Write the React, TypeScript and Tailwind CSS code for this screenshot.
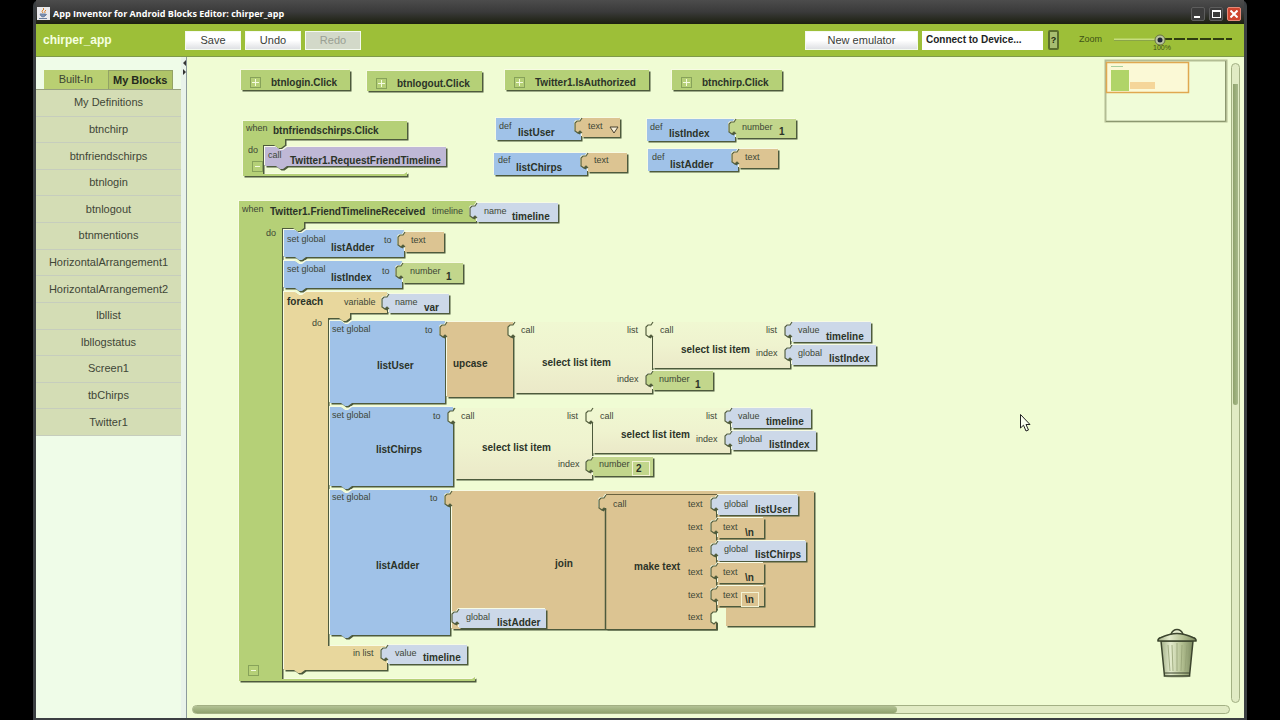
import type { ReactNode } from "react";

const drawers = [
  "My Definitions",
  "btnchirp",
  "btnfriendschirps",
  "btnlogin",
  "btnlogout",
  "btnmentions",
  "HorizontalArrangement1",
  "HorizontalArrangement2",
  "lbllist",
  "lbllogstatus",
  "Screen1",
  "tbChirps",
  "Twitter1",
];

// where the viewport sits on the workspace
const PAN = { x: 187, y: 57 };

const GREEN = "#b5d077";
const BLUE = "#a0c2e8";
const PALE = "#ccd8e8";
const TAN = "#dcc492";
const LIME = "#c2d68c";
const SAND = "#e8d79d";
const LILAC = "#bfb8d6";
const CREAM = "url(#cream)";

type Shape = "box" | "plug" | "statement";
// kind, x, y, text ("s" small, "b" bold)
type Label = ["s" | "b", number, number, string];

interface BlockData {
  shape: Shape;
  x: number;
  y: number;
  w: number;
  h: number;
  fill: string;
  labels: Label[];
}

const PLUG_EDGE = "l-2 3 h-3 l-2 2 v8 l3 2 l2 -2 l2 2";

function outline({ shape, x, y, w, h }: BlockData) {
  if (shape === "plug") {
    return `M${x} ${y} ${PLUG_EDGE} V${y + h} h${w} v${-h} Z`;
  }
  if (shape === "statement") {
    return `M${x} ${y} h11 l4 3 h3 l4 -3 H${x + w} v${h} H${x + 22} l-4 3 h-3 l-4 -3 H${x} Z`;
  }
  return `M${x} ${y} h${w} v${h} h${-w} Z`;
}

const collapsed: BlockData[] = [
  { shape: "box", x: 241, y: 70, w: 109, h: 20, fill: GREEN, labels: [["b", 271, 86, "btnlogin.Click"]] },
  { shape: "box", x: 367, y: 71, w: 115, h: 20, fill: GREEN, labels: [["b", 397, 87, "btnlogout.Click"]] },
  { shape: "box", x: 505, y: 70, w: 144, h: 20, fill: GREEN, labels: [["b", 535, 86, "Twitter1.IsAuthorized"]] },
  { shape: "box", x: 672, y: 70, w: 110, h: 20, fill: GREEN, labels: [["b", 702, 86, "btnchirp.Click"]] },
];

const definitions: BlockData[] = [
  { shape: "box", x: 496, y: 118, w: 85, h: 22, fill: BLUE, labels: [["s", 499, 129, "def"], ["b", 518, 136, "listUser"]] },
  { shape: "plug", x: 582, y: 118, w: 38, h: 19, fill: TAN, labels: [["s", 588, 129, "text"]] },
  { shape: "box", x: 494, y: 153, w: 93, h: 22, fill: BLUE, labels: [["s", 498, 163, "def"], ["b", 516, 171, "listChirps"]] },
  { shape: "plug", x: 588, y: 153, w: 39, h: 19, fill: TAN, labels: [["s", 594, 163, "text"]] },
  { shape: "box", x: 647, y: 119, w: 88, h: 22, fill: BLUE, labels: [["s", 650, 130, "def"], ["b", 669, 137, "listIndex"]] },
  { shape: "plug", x: 736, y: 119, w: 60, h: 19, fill: LIME, labels: [["s", 742, 130, "number"], ["b", 779, 135, "1"]] },
  { shape: "box", x: 648, y: 149, w: 90, h: 22, fill: BLUE, labels: [["s", 652, 160, "def"], ["b", 670, 168, "listAdder"]] },
  { shape: "plug", x: 739, y: 149, w: 39, h: 19, fill: TAN, labels: [["s", 745, 160, "text"]] },
];

const handlerBody: BlockData[] = [
  { shape: "plug", x: 477, y: 203, w: 81, h: 19, fill: PALE, labels: [["s", 484, 214, "name"], ["b", 512, 220, "timeline"]] },
  { shape: "statement", x: 284, y: 230, w: 120, h: 27, fill: BLUE, labels: [["s", 287, 242, "set global"], ["b", 331, 251, "listAdder"], ["s", 384, 243, "to"]] },
  { shape: "plug", x: 405, y: 232, w: 39, h: 20, fill: TAN, labels: [["s", 411, 243, "text"]] },
  { shape: "statement", x: 284, y: 261, w: 118, h: 27, fill: BLUE, labels: [["s", 287, 272, "set global"], ["b", 331, 281, "listIndex"], ["s", 382, 274, "to"]] },
  { shape: "plug", x: 403, y: 263, w: 60, h: 20, fill: LIME, labels: [["s", 410, 274, "number"], ["b", 446, 280, "1"]] },
];

const loopBody: BlockData[] = [
  { shape: "plug", x: 389, y: 294, w: 60, h: 19, fill: PALE, labels: [["s", 395, 305, "name"], ["b", 424, 311, "var"]] },

  { shape: "statement", x: 330, y: 321, w: 115, h: 82, fill: BLUE, labels: [["s", 332, 332, "set global"], ["b", 377, 369, "listUser"], ["s", 425, 333, "to"]] },
  { shape: "plug", x: 447, y: 322, w: 66, h: 75, fill: TAN, labels: [["b", 453, 367, "upcase"]] },
  { shape: "plug", x: 515, y: 322, w: 137, h: 71, fill: CREAM, labels: [["s", 521, 333, "call"], ["b", 542, 366, "select list item"], ["s", 627, 333, "list"], ["s", 617, 382, "index"]] },
  { shape: "plug", x: 653, y: 322, w: 137, h: 46, fill: CREAM, labels: [["s", 660, 333, "call"], ["b", 681, 353, "select list item"], ["s", 766, 333, "list"], ["s", 756, 356, "index"]] },
  { shape: "plug", x: 792, y: 322, w: 79, h: 20, fill: PALE, labels: [["s", 798, 333, "value"], ["b", 826, 340, "timeline"]] },
  { shape: "plug", x: 792, y: 345, w: 84, h: 20, fill: PALE, labels: [["s", 798, 356, "global"], ["b", 829, 362, "listIndex"]] },
  { shape: "plug", x: 653, y: 371, w: 60, h: 19, fill: LIME, labels: [["s", 659, 382, "number"], ["b", 695, 388, "1"]] },

  { shape: "statement", x: 330, y: 407, w: 123, h: 79, fill: BLUE, labels: [["s", 332, 418, "set global"], ["b", 376, 453, "listChirps"], ["s", 433, 419, "to"]] },
  { shape: "plug", x: 455, y: 408, w: 137, h: 71, fill: CREAM, labels: [["s", 461, 419, "call"], ["b", 482, 451, "select list item"], ["s", 567, 419, "list"], ["s", 558, 467, "index"]] },
  { shape: "plug", x: 593, y: 408, w: 137, h: 45, fill: CREAM, labels: [["s", 600, 419, "call"], ["b", 621, 438, "select list item"], ["s", 706, 419, "list"], ["s", 696, 442, "index"]] },
  { shape: "plug", x: 732, y: 408, w: 79, h: 20, fill: PALE, labels: [["s", 738, 419, "value"], ["b", 766, 425, "timeline"]] },
  { shape: "plug", x: 732, y: 431, w: 84, h: 19, fill: PALE, labels: [["s", 738, 442, "global"], ["b", 769, 448, "listIndex"]] },
  { shape: "plug", x: 593, y: 457, w: 60, h: 19, fill: LIME, labels: [["s", 599, 467, "number"]] },

  { shape: "statement", x: 330, y: 490, w: 120, h: 145, fill: BLUE, labels: [["s", 332, 500, "set global"], ["b", 376, 569, "listAdder"], ["s", 430, 501, "to"]] },
];

const joinBody: BlockData[] = [
  { shape: "plug", x: 606, y: 495, w: 110, h: 134, fill: TAN, labels: [["s", 613, 507, "call"], ["b", 634, 570, "make text"]] },
  { shape: "plug", x: 718, y: 495, w: 80, h: 20, fill: PALE, labels: [["s", 724, 507, "global"], ["b", 755, 513, "listUser"]] },
  { shape: "plug", x: 718, y: 518, w: 46, h: 20, fill: TAN, labels: [["s", 723, 530, "text"], ["b", 745, 536, "\\n"]] },
  { shape: "plug", x: 718, y: 541, w: 88, h: 20, fill: PALE, labels: [["s", 724, 552, "global"], ["b", 755, 558, "listChirps"]] },
  { shape: "plug", x: 718, y: 563, w: 46, h: 20, fill: TAN, labels: [["s", 723, 575, "text"], ["b", 745, 581, "\\n"]] },
  { shape: "plug", x: 718, y: 586, w: 46, h: 20, fill: TAN, labels: [["s", 723, 598, "text"]] },
  { shape: "plug", x: 459, y: 609, w: 87, h: 19, fill: PALE, labels: [["s", 466, 620, "global"], ["b", 497, 626, "listAdder"]] },
  { shape: "plug", x: 388, y: 645, w: 79, h: 19, fill: PALE, labels: [["s", 395, 656, "value"], ["b", 423, 661, "timeline"]] },
];

const argumentRows = [507, 530, 552, 575, 598, 620];

function Labels({ items }: { items: Label[] }) {
  return (
    <>
      {items.map(([kind, x, y, text]) => (
        <text
          key={`${x}-${y}`}
          x={x}
          y={y}
          className={kind === "b" ? "fill-[#2b3328] text-[10px] font-bold" : "fill-[#3d4636] text-[9px]"}
        >
          {text}
        </text>
      ))}
    </>
  );
}

// raised edge: light copy up-left, dark copy down-right, face on top
function Face({ d, fill }: { d: string; fill: string }) {
  const flat = fill === CREAM;
  return (
    <>
      {!flat && <path d={d} fill="#f7fbe4" transform="translate(-1 -1)" />}
      <path d={d} fill="#4d5a3c" transform="translate(1.5 1.5)" />
      {flat && <path d={d} fill="#f0fcd4" />}
      <path d={d} fill={fill} />
    </>
  );
}

function Block({ block }: { block: BlockData }) {
  return (
    <g>
      <Face d={outline(block)} fill={block.fill} />
      {block.shape === "plug" && (
        <path d={`M${block.x} ${block.y} ${PLUG_EDGE}`} fill="none" stroke="#55603f" strokeWidth="1.2" />
      )}
      <Labels items={block.labels} />
    </g>
  );
}

function Blocks({ items }: { items: BlockData[] }) {
  return (
    <>
      {items.map((b) => (
        <Block key={`${b.x}-${b.y}`} block={b} />
      ))}
    </>
  );
}

function BlockDrawing() {
  return (
    <svg
      width="1042"
      height="646"
      viewBox={`${PAN.x} ${PAN.y} 1042 646`}
      className="block max-w-none"
      role="img"
      aria-label="Block program"
    >
      <defs>
        <linearGradient id="cream" x1="0" y1="0" x2="0" y2="1">
          <stop offset="0" stopColor="#f0f8d2" />
          <stop offset="0.5" stopColor="#eff3cf" />
          <stop offset="1" stopColor="#ebe9c8" />
        </linearGradient>
      </defs>

      <Blocks items={collapsed} />
      <Blocks items={definitions} />
      <path d="M610 127 h8 l-4 6 Z" fill="#f7efd8" stroke="#4a4230" />

      <Face
        d="M243 121 H407 V139 H285 V145 l-4 3 h-3 l-4 -3 H263 V174 H404 l3 -2 V176 H243 Z"
        fill={GREEN}
      />
      <Labels items={[["s", 246, 131, "when"], ["b", 273, 134, "btnfriendschirps.Click"], ["s", 248, 153, "do"]]} />
      <Block
        block={{
          shape: "statement",
          x: 265,
          y: 147,
          w: 181,
          h: 19,
          fill: LILAC,
          labels: [["s", 268, 158, "call"], ["b", 290, 164, "Twitter1.RequestFriendTimeline"]],
        }}
      />

      <Face
        d="M239 201 H476 V222 H304 V228 l-4 3 h-3 l-4 -3 H282 V679 H472 l3 -2 V681 H239 Z"
        fill={GREEN}
      />
      <Labels
        items={[
          ["s", 242, 212, "when"],
          ["b", 270, 215, "Twitter1.FriendTimelineReceived"],
          ["s", 432, 214, "timeline"],
          ["s", 266, 236, "do"],
        ]}
      />
      <Face
        d="M284 292 h11 l4 3 h3 l4 -3 H387 V313 H350 V318 l-4 3 h-3 l-4 -3 H328 V646 H387 V670 H305 l-4 3 h-3 l-4 -3 H284 Z"
        fill={SAND}
      />
      <Labels
        items={[
          ["b", 287, 305, "foreach"],
          ["s", 344, 305, "variable"],
          ["s", 312, 326, "do"],
          ["s", 353, 656, "in list"],
        ]}
      />
      <Blocks items={handlerBody} />
      <Blocks items={loopBody} />

      <Face d={`M452 491 ${PLUG_EDGE} V629 H717 V609 H726 V626 H814 V491 Z`} fill={TAN} />
      <path d={`M452 491 ${PLUG_EDGE}`} fill="none" stroke="#55603f" strokeWidth="1.2" />
      <Labels items={[["b", 555, 567, "join"]]} />
      <Blocks items={joinBody} />
      <path d="M605.500 508 V630" stroke="#4d5a3c" strokeWidth="1.500" />
      <path d="M606 494.500 H717" stroke="#6b6340" />
      <path d={`M718 609 ${PLUG_EDGE} v4 Z`} fill="#f0fcd4" />
      <path d={`M718 609 ${PLUG_EDGE}`} fill="none" stroke="#55603f" strokeWidth="1.2" />
      <rect x="718" y="608" width="8" height="23" fill="#f0fcd4" />
      <Labels items={argumentRows.map((y): Label => ["s", 688, y, "text"])} />
    </svg>
  );
}

const toggles = [
  { x: 250, y: 77, open: false, name: "btnlogin.Click" },
  { x: 376, y: 78, open: false, name: "btnlogout.Click" },
  { x: 514, y: 77, open: false, name: "Twitter1.IsAuthorized" },
  { x: 681, y: 77, open: false, name: "btnchirp.Click" },
  { x: 252, y: 161, open: true, name: "btnfriendschirps.Click" },
  { x: 248, y: 665, open: true, name: "Twitter1.FriendTimelineReceived" },
];

const fields = [
  { x: 632, y: 461, value: "2", name: "number value" },
  { x: 741, y: 592, value: "\\n", name: "text value" },
];

function Toggle({ x, y, open, name }: (typeof toggles)[number]) {
  return (
    <button
      type="button"
      aria-label={name}
      aria-expanded={open}
      style={{ left: x - PAN.x, top: y - PAN.y }}
      className="absolute flex size-[11px] items-center justify-center border border-[#87a25a]"
    >
      <svg width="7" height="7" viewBox="0 0 7 7" stroke="#f4fbe0" strokeWidth="1">
        <path d={open ? "M1 3.5 h5" : "M0 3.5 h7 M3.5 0 v7"} />
      </svg>
    </button>
  );
}

function Overview() {
  return (
    <svg width="124" height="65" viewBox="0 0 124 65" className="absolute top-[2px] right-0">
      <rect x="1.5" y="1.5" width="121" height="61" fill="#f0fcd8" stroke="#b3bd94" strokeWidth="2" />
      <path d="M121.500 2 V62.500 H2" fill="none" stroke="#8c9870" />
      <rect x="2.500" y="3.500" width="82" height="30" fill="#fbf9d6" stroke="#e0a850" strokeWidth="1.500" />
      <path d="M7 7.500 h12" stroke="#a8cf9c" />
      <rect x="7" y="11" width="18" height="21" fill="#b0d468" />
      <rect x="26" y="23" width="25" height="7" fill="#f5d69a" />
    </svg>
  );
}

function Trash() {
  return (
    <svg width="40" height="51" viewBox="0 0 40 51" className="absolute right-[31px] bottom-[25px]">
      <defs>
        <linearGradient id="bin" x1="0" x2="1">
          <stop offset="0" stopColor="#a3b088" />
          <stop offset="0.3" stopColor="#e3ebcc" />
          <stop offset="0.65" stopColor="#b4c192" />
          <stop offset="1" stopColor="#7d8b60" />
        </linearGradient>
      </defs>
      <ellipse cx="20" cy="48" rx="14" ry="2" fill="#d2ddb6" />
      <path d="M4 13 L7.500 48 H32.500 L36 13 Z" fill="url(#bin)" stroke="#3c452e" strokeWidth="1.500" />
      <path d="M8 45 H32.500" stroke="#3c452e" />
      <path d="M11 17 L13 43 M15 17 L16 43 M20 15 V43 M25 17 L24 43 M30 17 L28 43" stroke="#95a276" strokeWidth="0.800" />
      <path d="M14 6 q2 -4.500 6 -4.500 t6 4.500" fill="#e6eed0" stroke="#3c452e" strokeWidth="1.500" />
      <path
        d="M1 13 q-0.500 -2.500 3 -3.500 q9 -4 16 -4 t16 4 q3.500 1 3 3.500 Z"
        fill="url(#bin)"
        stroke="#3c452e"
        strokeWidth="1.500"
        strokeLinejoin="round"
      />
    </svg>
  );
}

function Workspace() {
  return (
    <main className="relative min-w-0 flex-1 overflow-hidden">
      <BlockDrawing />
      {toggles.map((t) => (
        <Toggle key={t.name} {...t} />
      ))}
      {fields.map((f) => (
        <input
          key={f.name}
          aria-label={f.name}
          defaultValue={f.value}
          style={{ left: f.x - PAN.x, top: f.y - PAN.y }}
          className="absolute h-[15px] w-[18px] border border-[#f3f3d4] px-[3px] text-[10px] leading-none font-bold text-[#2b3328]"
        />
      ))}
      <Overview />
      <Trash />
      <svg width="12" height="19" viewBox="0 0 12 19" className="absolute top-[357px] left-[833px]">
        <path
          d="M0.500 0.500 V14 L3.500 11.200 L6 17 L8.500 16 L6 10.500 H10 Z"
          fill="#fbfff0"
          stroke="#222"
        />
      </svg>
    </main>
  );
}

function ToolButton({ children, className = "w-14", disabled }: { children: ReactNode; className?: string; disabled?: boolean }) {
  return (
    <button
      type="button"
      disabled={disabled}
      className={`h-[19px] border border-[#f4faf0] text-[11px] leading-none ${className} ${
        disabled ? "bg-[#d3d9c9] text-[#9aa093]" : "bg-linear-to-b from-white from-50% to-[#dfe1e4] text-[#3a3d38]"
      }`}
    >
      {children}
    </button>
  );
}

function TitleBar() {
  return (
    <header className="flex h-6 items-center bg-linear-to-b from-[#4c4c4c] via-[#3a3a3a] to-[#1c200f] pt-[3px] pr-[3px] pl-[1px]">
      <svg width="13" height="13" viewBox="0 0 13 13" className="mr-[3px]">
        <rect width="13" height="13" fill="#e9e9ec" />
        <path d="M6 6 q-2 -2 0 -3 t0 -2 M8 6 q-1 -2 1 -3" fill="none" stroke="#d9822b" />
        <path d="M3 7 h5 v2 q-2 2 -4 0 Z M8 7 q3 0 0 2 M2 11.500 h8" fill="#7d93b5" stroke="#6b7f9f" />
      </svg>
      <h1 className="flex-1 font-['Open_Sans'] text-[9px] leading-none font-bold text-white">
        App Inventor for Android Blocks Editor: chirper_app
      </h1>
      <div className="flex gap-1">
        <button type="button" aria-label="Minimize" className="flex size-[14px] items-end rounded-xs border border-[#5d5d5d] bg-[#3c3c3c] p-[2px]">
          <span className="h-[2px] w-[6px] bg-white" />
        </button>
        <button type="button" aria-label="Maximize" className="flex size-[14px] items-center justify-center rounded-xs border border-[#5d5d5d] bg-[#3c3c3c]">
          <span className="h-2 w-[9px] border border-t-2 border-white" />
        </button>
        <button type="button" aria-label="Close" className="flex size-[14px] items-center justify-center rounded-xs border border-[#e58a78] bg-[#cf4630]">
          <svg width="8" height="8" viewBox="0 0 8 8" stroke="#fff" strokeWidth="2">
            <path d="M0.500 0.500 L7.500 7.500 M7.500 0.500 L0.500 7.500" />
          </svg>
        </button>
      </div>
    </header>
  );
}

function ZoomSlider() {
  return (
    <div className="flex items-center">
      <label htmlFor="zoom" className="mr-3 text-[9px] text-[#3f5216]">
        Zoom
      </label>
      <div className="relative h-5 w-[118px]">
        <svg width="118" height="20" viewBox="0 0 118 20" className="block">
          <path d="M0 9.500 H46" stroke="#c6dd7e" strokeWidth="2" />
          <path d="M0 10.500 H46" stroke="#8aa548" />
          <path d="M47 9 H118" stroke="#2f3c10" strokeWidth="2" strokeDasharray="11 2" />
          <circle cx="46" cy="10" r="5" fill="#b9c4a0" stroke="#66733f" />
          <circle cx="46" cy="10" r="2.500" fill="#1e2433" />
        </svg>
        <span className="absolute top-[14px] left-[39px] text-[7px] leading-none text-[#3f5216]">100%</span>
        <input id="zoom" type="range" defaultValue={40} className="absolute inset-0 w-full opacity-0" />
      </div>
    </div>
  );
}

function Toolbar() {
  return (
    <div className="flex h-[33px] items-center border-b border-[#7f9a4a] bg-[#9dbf38] pr-3 pl-[7px]">
      <span className="w-[142px] text-[12px] font-bold text-[#f6ffe0]">chirper_app</span>
      <div className="flex flex-1 gap-1">
        <ToolButton>Save</ToolButton>
        <ToolButton>Undo</ToolButton>
        <ToolButton disabled>Redo</ToolButton>
      </div>
      <ToolButton className="mr-1 w-[113px]">New emulator</ToolButton>
      <select
        aria-label="Device"
        className="h-[19px] w-[121px] appearance-none bg-white px-1 text-[10px] leading-none font-bold text-[#22251f]"
      >
        <option>Connect to Device...</option>
      </select>
      <button
        type="button"
        aria-label="Help"
        className="mr-5 ml-[5px] h-5 w-[11px] rounded-xs border-2 border-[#5a6d2c] bg-[#a8bd70] text-[9px] leading-none font-bold text-[#20280c]"
      >
        ?
      </button>
      <ZoomSlider />
    </div>
  );
}

function Sidebar() {
  return (
    <aside className="flex w-[145px] flex-col bg-[#effce8] pt-[13px]">
      <div role="tablist" className="flex h-[19px] px-2 text-[11px] leading-none text-[#3c4433]">
        <button type="button" role="tab" aria-selected="false" className="h-full flex-1 bg-[#b9cf72]">
          Built-In
        </button>
        <button
          type="button"
          role="tab"
          aria-selected="true"
          className="h-full flex-1 border border-b-0 border-[#93a365] bg-[#afc468] font-bold text-[#23281c]"
        >
          My Blocks
        </button>
      </div>
      <nav className="grid h-[347px] auto-rows-fr border-t border-[#97a17f]">
        {drawers.map((name) => (
          <button
            key={name}
            type="button"
            className="border-b border-[#c6cdbd] bg-[#d4ddb5] text-[11px] leading-none text-[#3f4637]"
          >
            {name}
          </button>
        ))}
      </nav>
    </aside>
  );
}

export default function App() {
  return (
    <div className="h-screen bg-black px-[33px] font-['Liberation_Sans',sans-serif]">
      <div className="flex h-full flex-col rounded-t-md border-x-3 border-b-2 border-[#3b3f42]">
        <TitleBar />
        <Toolbar />
        <div className="flex min-h-0 flex-1">
          <Sidebar />
          <div className="w-[6px] border-r border-[#8c9a9c] bg-[#e9f3ea]">
            <svg width="5" height="20" viewBox="0 0 5 20" fill="#333">
              <path d="M5 3 v6 l-3 -3 Z M2 12 v6 l3 -3 Z" />
            </svg>
          </div>
          <div className="flex min-w-0 flex-1 flex-col bg-[#f0fcd4]">
            <div className="flex min-h-0 flex-1">
              <Workspace />
              <div className="mt-[6px] mr-1 mb-[1px] ml-[3px] w-[9px] rounded-full border border-[#a3b084] bg-[#e1ebc4] pt-5">
                <div className="mx-auto h-[52%] w-[5px] rounded-b-full bg-linear-to-r from-[#8fa26c] to-[#a8b98a]" />
              </div>
            </div>
            <div className="mt-[1px] mr-[14px] mb-1 ml-[5px] h-[9px] rounded-full border border-[#a3b084] bg-[#e1ebc4]">
              <div className="h-[7px] w-[68%] rounded-full bg-linear-to-b from-[#b3c295] to-[#8fa26c]" />
            </div>
          </div>
        </div>
      </div>
    </div>
  );
}
